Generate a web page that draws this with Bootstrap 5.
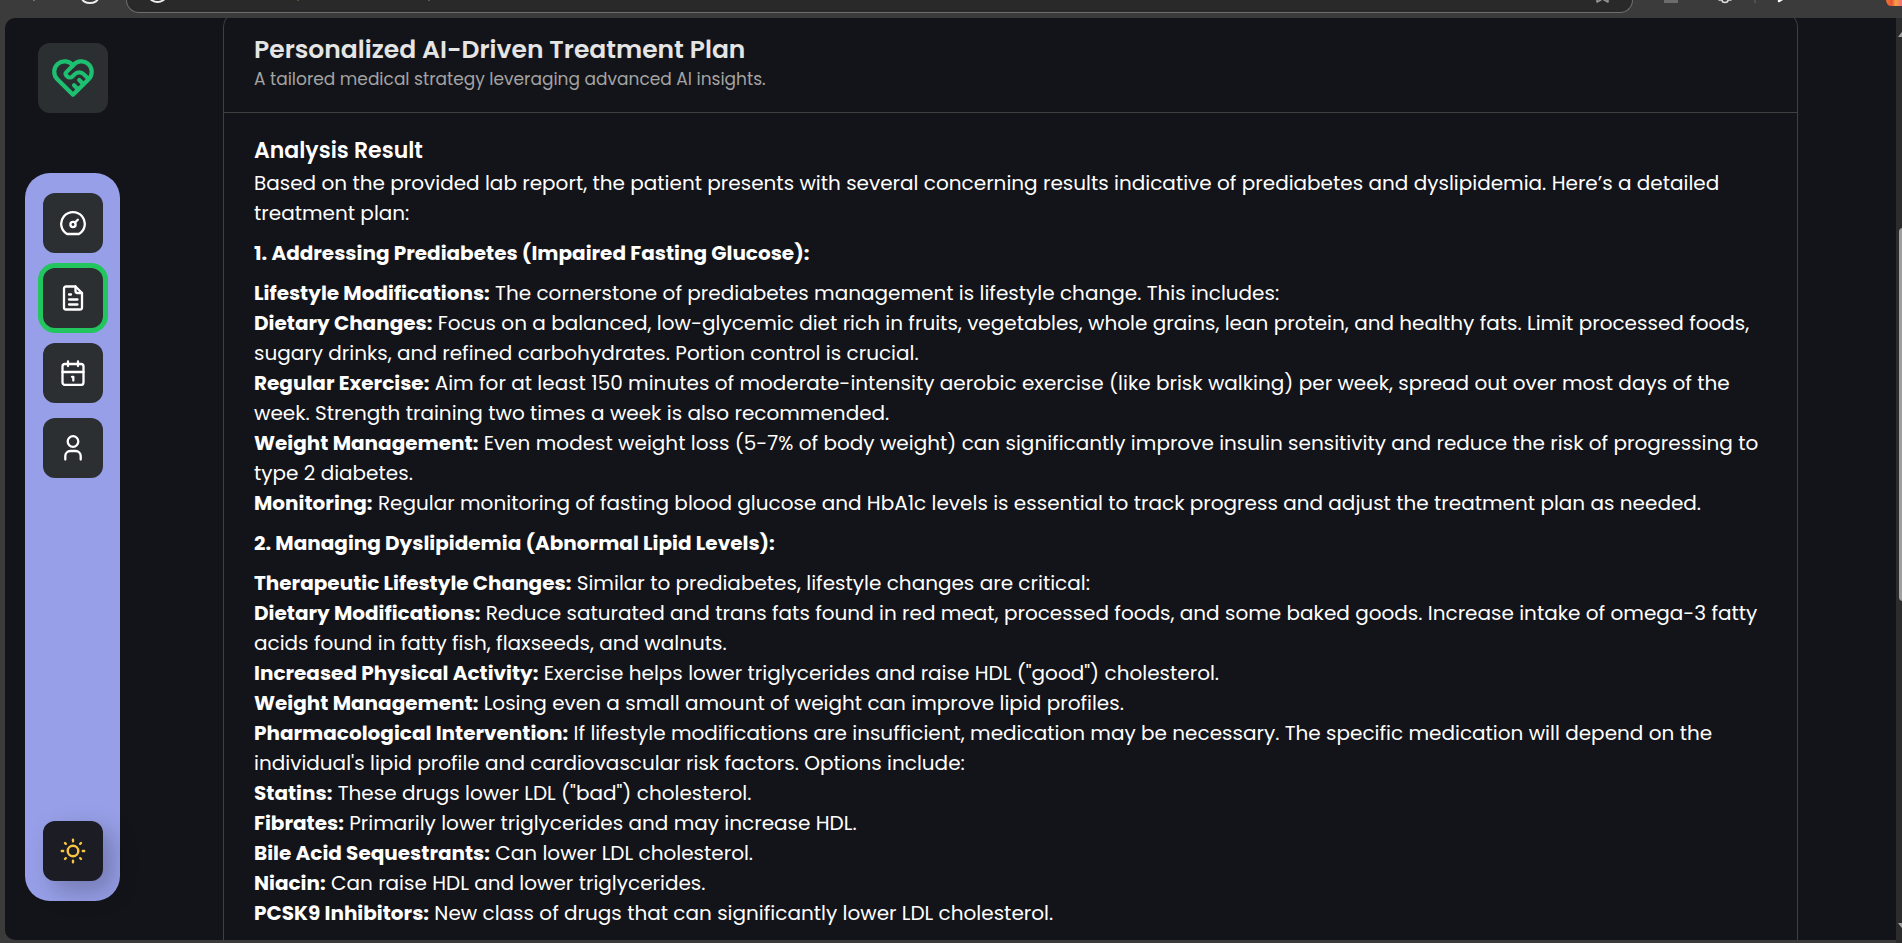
<!DOCTYPE html>
<html lang="en">
<head>
<meta charset="utf-8">
<meta name="viewport" content="width=device-width, initial-scale=1">
<title>Personalized AI-Driven Treatment Plan</title>
<link href="https://cdn.jsdelivr.net/npm/bootstrap@5.3.0/dist/css/bootstrap.min.css" rel="stylesheet">
<style>
  body { background: #3b3b3b; font-family: Poppins, Inter, sans-serif; color: #fff; }
  .chrome-strip { height: 18px; }
  .chrome-left { width: 126px; height: 13px; }
  .chrome-right { width: 269px; height: 18px; }
  .address { height: 13px; background: #292929; border: 1px solid #6e6e6e; border-top: 0; border-radius: 0 0 17px 17px; }
  .viewport-pane { margin: 0 0 3px 5px; background: #131419; border-radius: 10px 0 0 10px; }
  .side { width: 218px; padding: 25px 0 39px 20px; }
  .brand { width: 70px; height: 70px; margin-left: 13px; margin-bottom: 60px; border-radius: 12px; background: #2c2f32; color: #1dc071; }
  .rail { width: 95px; padding: 20px 0; gap: 15px; border-radius: 25px; background: #979fe8; }
  .rail-btn { width: 60px; height: 60px; border-radius: 12px; background: #2c2f32; color: #fff; text-decoration: none; }
  .rail-btn:hover { color: #fff; }
  .rail-btn.current { box-shadow: 0 0 0 5px #22c55e; }
  .rail-btn.theme { background: #1c1c24; color: #f9c440; box-shadow: 10px 10px 25px rgba(10, 10, 10, .25); }
  .plan { margin: -6px 98px 0 0; border: 1px solid #404040; border-bottom: 0; border-radius: 15px 15px 0 0; }
  .plan-head { padding: 21px 30px 20px; border-bottom: 1px solid #404040; }
  .plan-head h1 { font-size: 25px; line-height: 32px; font-weight: 600; color: #e5e5e5; }
  .plan-head p { font-size: 17px; line-height: 26px; color: #a3a3a3; }
  .plan-body { padding: 20px 30px; font-size: 20px; line-height: 30px; }
  .plan-body h2 { font-size: 22px; line-height: 35px; font-weight: 600; }
  .plan-body h3 { font-size: 20px; line-height: 30px; font-weight: 700; margin: 10px 0; }
  .scroll-track { width: 6px; background: #2c2c2c; }
  svg { display: block; fill: none; stroke: currentColor; stroke-linecap: round; stroke-linejoin: round; }
</style>
<script src="https://cdn.jsdelivr.net/npm/bootstrap@5.3.0/dist/js/bootstrap.bundle.min.js"></script>
</head>
<body>
<div class="d-flex flex-column vh-100 overflow-hidden">
  <div class="chrome-strip d-flex flex-shrink-0" aria-hidden="true">
    <svg class="chrome-left flex-shrink-0" viewBox="0 0 126 13"><path d="M34 0v.5" stroke="#bbb"/><path d="M82 -2a8 5 0 0 0 16 0" stroke="#eee" stroke-width="2"/></svg>
    <div class="address flex-grow-1 d-flex justify-content-between overflow-hidden">
      <svg width="320" height="12" viewBox="127 0 320 12"><path d="M150 -3a7.500 5 0 0 0 15 0" stroke="#eee" stroke-width="2"/><path d="M298 0v.4" stroke="#b58a3c"/><path d="M429 0v.4" stroke="#aaa"/></svg>
      <svg width="40" height="12" viewBox="1592 0 40 12"><path d="M1597 -3v5l5.500 -3 5.500 3v-5" stroke="#999" stroke-width="1.500"/></svg>
    </div>
    <svg class="chrome-right flex-shrink-0" viewBox="1633 0 269 18">
      <defs><linearGradient id="avatar"><stop offset="0" stop-color="#f47b2a"/><stop offset=".35" stop-color="#e8503a"/><stop offset=".6" stop-color="#f6a13c"/><stop offset="1" stop-color="#f0707c"/></linearGradient></defs>
      <path d="M1664 0h14v3h-14z" fill="#6c6c6c" stroke="none"/>
      <path d="M1719 0h3a3 2.500 0 0 0 6 0h3" stroke="#ddd" stroke-width="1.500"/>
      <path d="M1755 0v3" stroke="#666"/>
      <path d="M1779 1l5 -3" stroke="#fff" stroke-width="2.500"/>
      <path d="M1886 0h16v6h-11q-4 0 -5 -6z" fill="url(#avatar)" stroke="none"/>
    </svg>
  </div>
  <div class="d-flex flex-grow-1 overflow-hidden">
    <div class="viewport-pane d-flex flex-grow-1 overflow-hidden">
      <aside class="side d-flex flex-column flex-shrink-0">
        <a class="brand d-flex align-items-center justify-content-center flex-shrink-0" href="#" aria-label="Home">
          <svg width="50" height="50" viewBox="0 0 24 24" stroke-width="2"><path d="M19.500 12.572l-7.500 7.428l-7.500 -7.428a5 5 0 1 1 7.500 -6.566a5 5 0 1 1 7.500 6.572"/><path d="M12 6l-3.293 3.293a1 1 0 0 0 0 1.414l.543 .543c.69 .69 1.810 .69 2.500 0l1 -1a3.182 3.182 0 0 1 4.500 0l2.250 2.250"/><path d="M12.500 15.500l2 2"/><path d="M15 13l2 2"/></svg>
        </a>
        <nav class="rail d-flex flex-column align-items-center flex-grow-1" aria-label="Main">
          <a class="rail-btn d-flex align-items-center justify-content-center" href="#" aria-label="Dashboard">
            <svg width="26" height="26" viewBox="0 0 26 26" stroke-width="2.300"><path d="M7 24a11.800 11.800 0 1 1 12 0z"/><circle cx="13" cy="14.500" r="2.600"/><path d="M15 12.500l2.800 -2.800"/></svg>
          </a>
          <a class="rail-btn current d-flex align-items-center justify-content-center" href="#" aria-label="Records" aria-current="page">
            <svg width="26" height="26" viewBox="0 0 26 26" stroke-width="2.300"><path d="M15.500 1.500H6a2 2 0 0 0 -2 2v19a2 2 0 0 0 2 2h14a2 2 0 0 0 2 -2V8z"/><path d="M15.500 1.500V6a2 2 0 0 0 2 2H22M9 9.500h2M9 14.500h8.500M9 19.500h8.500"/></svg>
          </a>
          <a class="rail-btn d-flex align-items-center justify-content-center" href="#" aria-label="Appointments">
            <svg width="26" height="26" viewBox="0 0 26 26" stroke-width="2.300"><rect x="2.500" y="4" width="21" height="21" rx="2.500"/><path d="M2.500 12h21M8 1.500V6M18 1.500V6M12 16.800h1.300v3.700"/></svg>
          </a>
          <a class="rail-btn d-flex align-items-center justify-content-center" href="#" aria-label="Profile">
            <svg width="26" height="26" viewBox="0 0 26 26" stroke-width="2.300"><circle cx="13" cy="6.500" r="5.300"/><path d="M5.300 24.500v-3.500a5 5 0 0 1 5 -5h5.400a5 5 0 0 1 5 5V24.500"/></svg>
          </a>
          <button class="rail-btn theme btn border-0 p-0 mt-auto d-flex align-items-center justify-content-center" type="button" aria-label="Switch theme">
            <svg width="26" height="26" viewBox="0 0 26 26" stroke-width="2.400"><circle cx="13" cy="13" r="5.300"/><path d="M13 1.800v1.400M13 22.800v1.400M1.800 13h1.400M22.800 13h1.400M5 5l.8 .8M20.200 20.200l.8 .8M5 21l.8 -.8M20.200 5.800l.8 -.8"/></svg>
          </button>
        </nav>
      </aside>
      <main class="plan flex-grow-1">
        <header class="plan-head">
          <h1 class="mb-0">Personalized AI-Driven Treatment Plan</h1>
          <p class="mb-0">A tailored medical strategy leveraging advanced AI insights.</p>
        </header>
        <section class="plan-body">
          <h2 class="mb-0">Analysis Result</h2>
          <p class="mb-0">Based on the provided lab report, the patient presents with several concerning results indicative of prediabetes and dyslipidemia. Here’s a detailed treatment plan:</p>
          <h3>1. Addressing Prediabetes (Impaired Fasting Glucose):</h3>
          <ul class="list-unstyled mb-0">
            <li><strong>Lifestyle Modifications:</strong> The cornerstone of prediabetes management is lifestyle change. This includes:</li>
            <li><strong>Dietary Changes:</strong> Focus on a balanced, low-glycemic diet rich in fruits, vegetables, whole grains, lean protein, and healthy fats. Limit processed foods, sugary drinks, and refined carbohydrates. Portion control is crucial.</li>
            <li><strong>Regular Exercise:</strong> Aim for at least 150 minutes of moderate-intensity aerobic exercise (like brisk walking) per week, spread out over most days of the week. Strength training two times a week is also recommended.</li>
            <li><strong>Weight Management:</strong> Even modest weight loss (5-7% of body weight) can significantly improve insulin sensitivity and reduce the risk of progressing to type 2 diabetes.</li>
            <li><strong>Monitoring:</strong> Regular monitoring of fasting blood glucose and HbA1c levels is essential to track progress and adjust the treatment plan as needed.</li>
          </ul>
          <h3>2. Managing Dyslipidemia (Abnormal Lipid Levels):</h3>
          <ul class="list-unstyled mb-0">
            <li><strong>Therapeutic Lifestyle Changes:</strong> Similar to prediabetes, lifestyle changes are critical:</li>
            <li><strong>Dietary Modifications:</strong> Reduce saturated and trans fats found in red meat, processed foods, and some baked goods. Increase intake of omega-3 fatty acids found in fatty fish, flaxseeds, and walnuts.</li>
            <li><strong>Increased Physical Activity:</strong> Exercise helps lower triglycerides and raise HDL ("good") cholesterol.</li>
            <li><strong>Weight Management:</strong> Losing even a small amount of weight can improve lipid profiles.</li>
            <li><strong>Pharmacological Intervention:</strong> If lifestyle modifications are insufficient, medication may be necessary. The specific medication will depend on the individual's lipid profile and cardiovascular risk factors. Options include:</li>
            <li><strong>Statins:</strong> These drugs lower LDL ("bad") cholesterol.</li>
            <li><strong>Fibrates:</strong> Primarily lower triglycerides and may increase HDL.</li>
            <li><strong>Bile Acid Sequestrants:</strong> Can lower LDL cholesterol.</li>
            <li><strong>Niacin:</strong> Can raise HDL and lower triglycerides.</li>
            <li><strong>PCSK9 Inhibitors:</strong> New class of drugs that can significantly lower LDL cholesterol.</li>
          </ul>
        </section>
      </main>
    </div>
    <div class="scroll-track flex-shrink-0" aria-hidden="true">
      <svg width="6" height="925" viewBox="0 18 6 925"><path d="M2 37l6 -8v8z" fill="#a0a0a0" stroke="none"/><rect x="3" y="228" width="10" height="373" rx="4" fill="#9f9f9f" stroke="none"/><path d="M2 923h6v8z" fill="#a0a0a0" stroke="none"/></svg>
    </div>
  </div>
</div>
</body>
</html>
